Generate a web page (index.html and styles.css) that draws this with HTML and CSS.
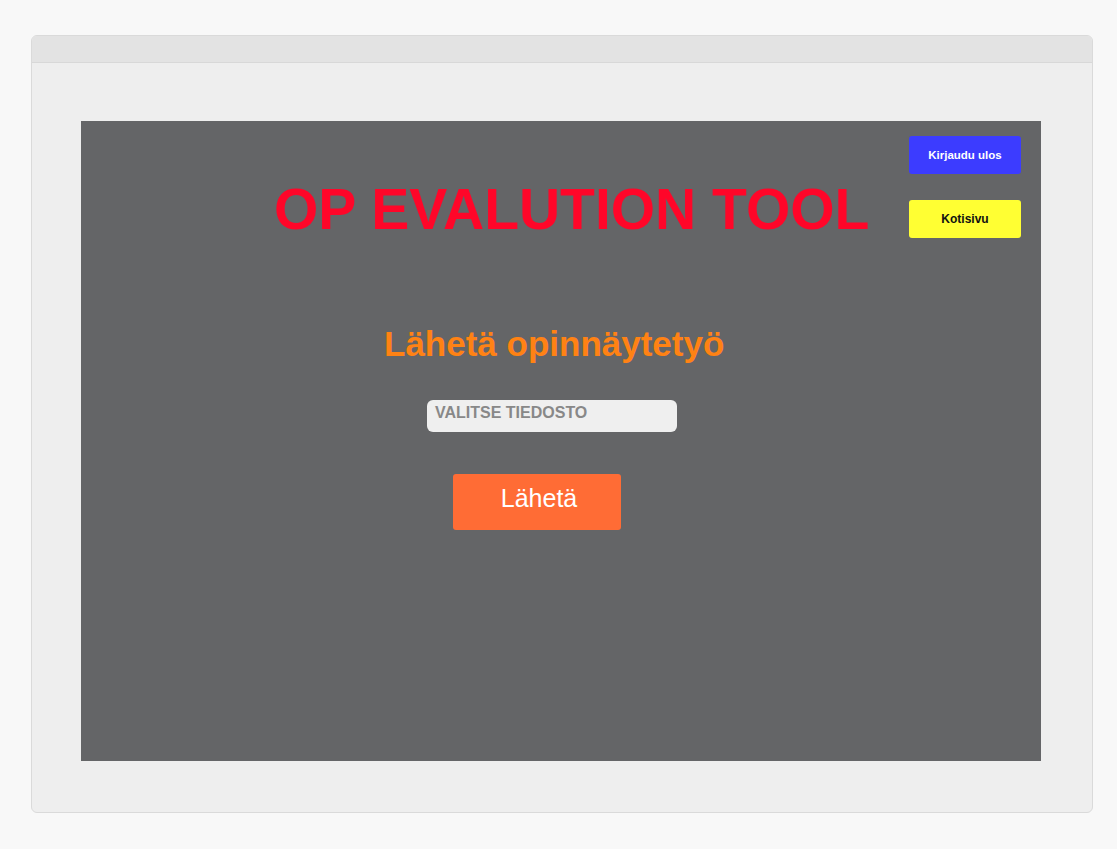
FILE: index.html
```html
<!DOCTYPE html>
<html lang="fi">
<head>
<meta charset="utf-8">
<title>OP Evaluation Tool</title>
<link rel="stylesheet" href="styles.css">
</head>
<body>
<div class="frame">
  <div class="titlebar"></div>
  <div class="viewport">
    <main class="panel">
      <header class="header">
        <h1 class="title">OP EVALUTION TOOL</h1>
        <nav class="nav">
          <button class="btn btn-logout">Kirjaudu ulos</button>
          <button class="btn btn-home">Kotisivu</button>
        </nav>
      </header>
      <h2 class="subtitle">Lähetä opinnäytetyö</h2>
      <label class="file">VALITSE TIEDOSTO</label>
      <button class="submit">Lähetä</button>
    </main>
  </div>
</div>
</body>
</html>
```

FILE: styles.css
```css
* { box-sizing: border-box; }
html, body { margin: 0; }
body {
  background: #f8f8f8;
  padding: 35px 24px 36px 31px;
  font-family: "Liberation Sans", Arial, sans-serif;
}
.frame {
  border: 1px solid #dadada;
  border-radius: 6px;
  background: #eeeeee;
  overflow: hidden;
  height: 778px;
}
.titlebar {
  height: 27px;
  background: #e3e3e3;
  border-bottom: 1px solid #d8d8d8;
}
.viewport {
  padding: 58px 50px 50px 49px;
}
.panel {
  width: 960px;
  height: 640px;
  background: #646567;
  display: flex;
  flex-direction: column;
  align-items: flex-start;
}
.header {
  display: flex;
  align-self: stretch;
  padding: 15px 20px 0 0;
}
.title {
  margin: 45px 0 0 193px;
  font-size: 57px;
  line-height: 57px;
  font-weight: bold;
  color: #ff0629;
}
.nav {
  margin-left: auto;
  display: flex;
  flex-direction: column;
  gap: 26px;
}
.btn {
  width: 112px;
  height: 38px;
  border: none;
  border-radius: 3px;
  font-family: "Liberation Sans", Arial, sans-serif;
  font-size: 12px;
  font-weight: bold;
  padding: 0;
}
.btn-logout { background: #3c3cff; color: #ffffff; font-size: 11.5px; }
.btn-home { background: #ffff33; color: #111111; }
.subtitle {
  margin: 88px 0 0 303px;
  font-size: 35px;
  line-height: 35px;
  font-weight: bold;
  color: #ff8214;
}
.file {
  margin: 39px 0 0 346px;
  width: 250px;
  height: 32px;
  padding: 4px 8px 0;
  background: #efefef;
  border-radius: 6px;
  font-size: 16px;
  font-weight: bold;
  color: #888888;
}
.submit {
  margin: 42px 0 0 372px;
  width: 168px;
  height: 56px;
  padding: 0 0 8px 4px;
  border: none;
  border-radius: 3px;
  background: #ff6c35;
  color: #ffffff;
  font-family: "Liberation Sans", Arial, sans-serif;
  font-size: 25px;
}
```
